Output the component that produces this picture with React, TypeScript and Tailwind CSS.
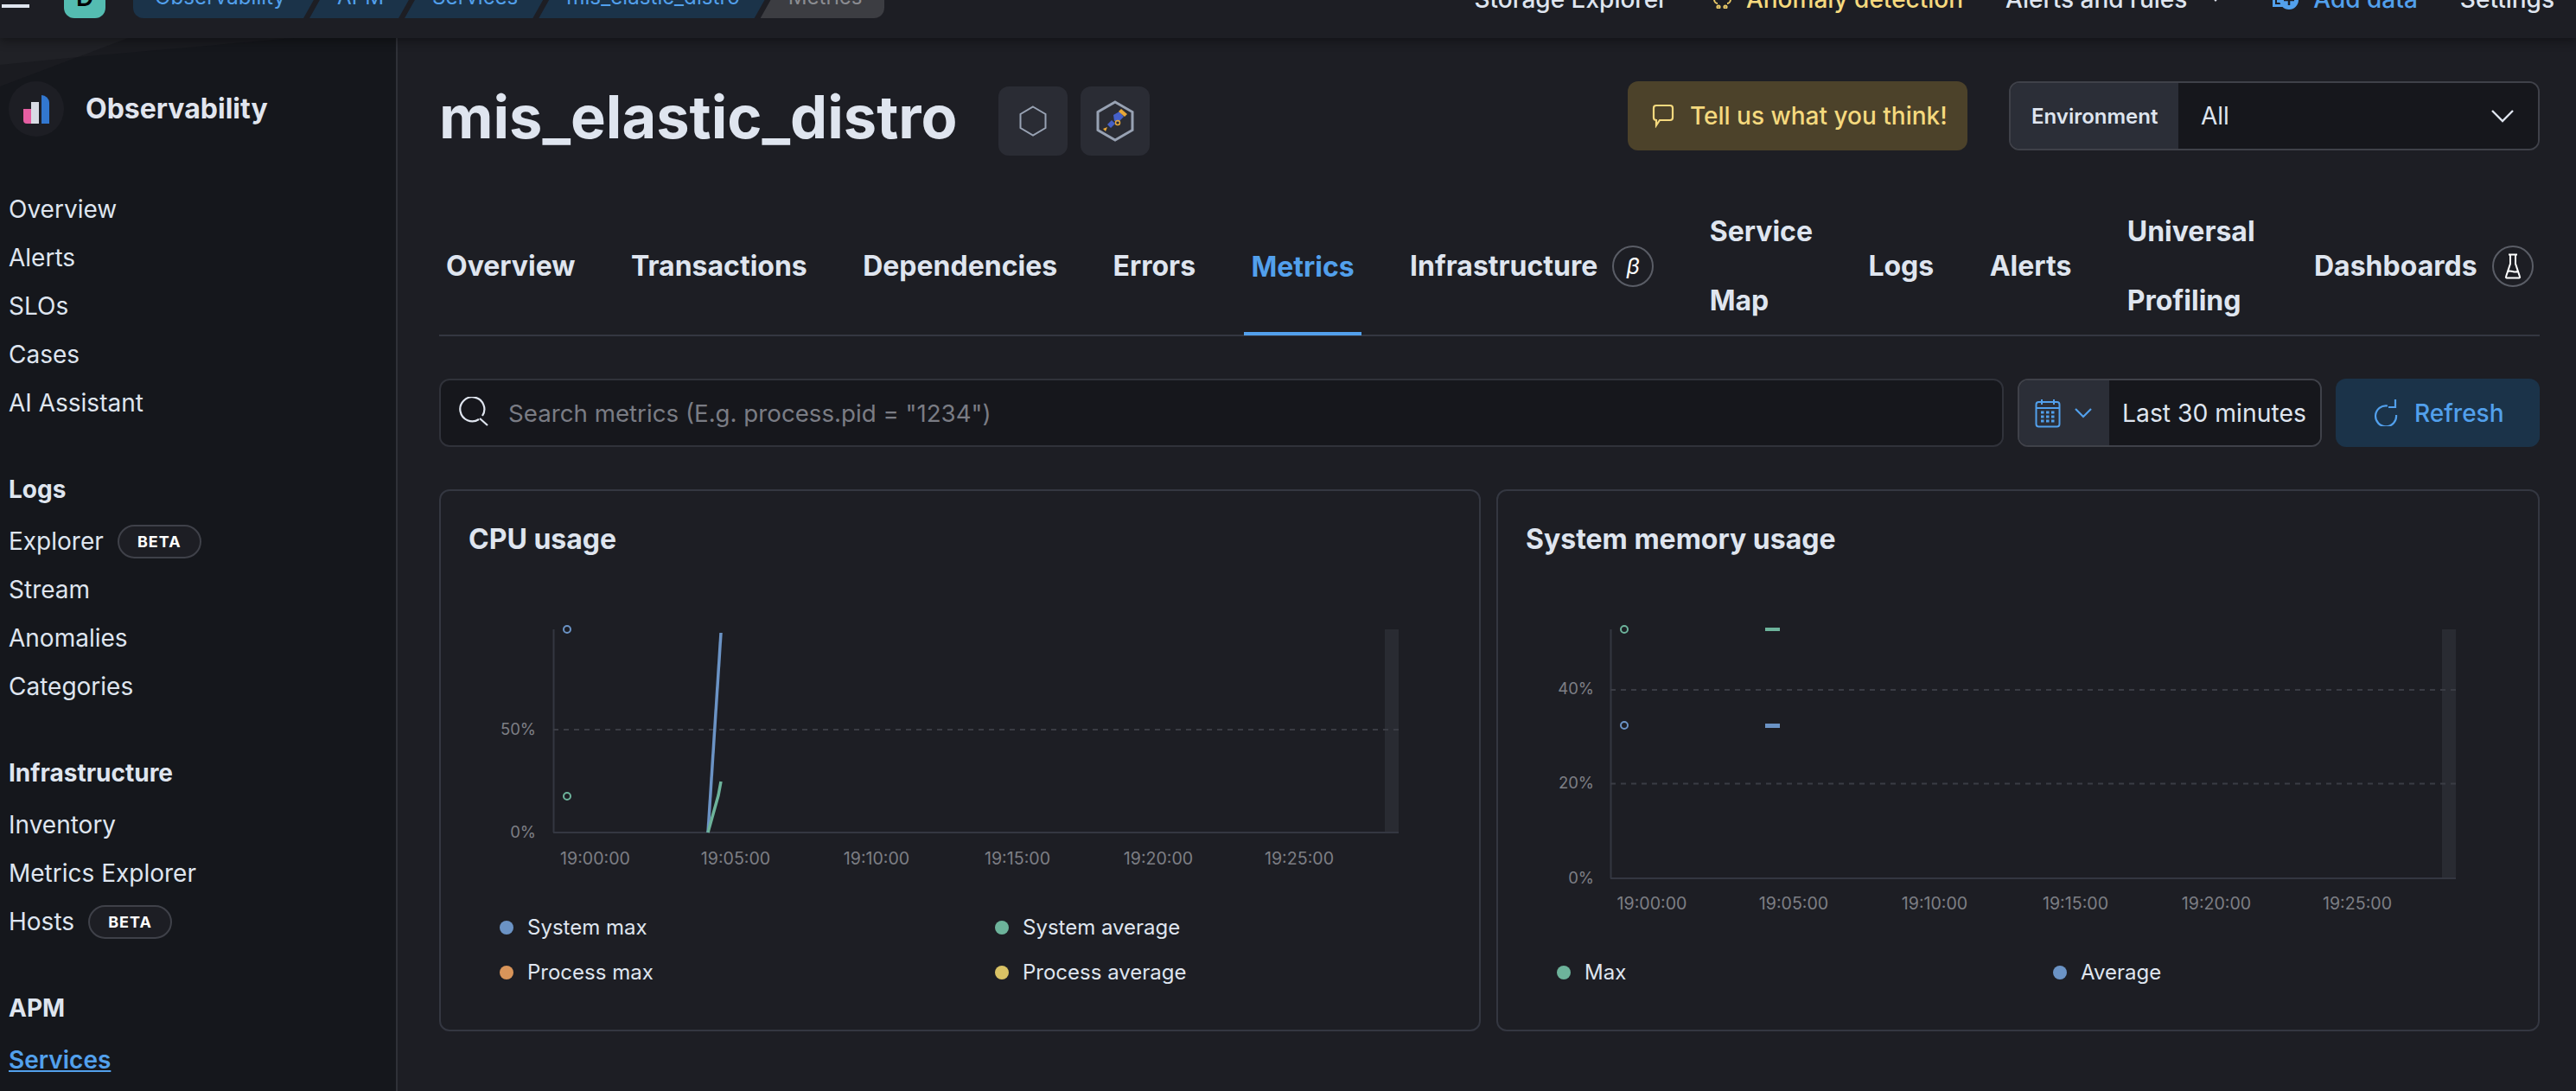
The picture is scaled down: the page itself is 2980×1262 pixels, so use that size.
import type { ReactNode } from "react";

const FONT = "[font-family:Inter,'Liberation_Sans',sans-serif]";

const crumbs = ["Observability", "APM", "Services", "mis_elastic_distro"];

const navGroups: { title?: string; items: { label: string; beta?: boolean; active?: boolean }[] }[] = [
  {
    items: [
      { label: "Overview" },
      { label: "Alerts" },
      { label: "SLOs" },
      { label: "Cases" },
      { label: "AI Assistant" },
    ],
  },
  {
    title: "Logs",
    items: [
      { label: "Explorer", beta: true },
      { label: "Stream" },
      { label: "Anomalies" },
      { label: "Categories" },
    ],
  },
  {
    title: "Infrastructure",
    items: [
      { label: "Inventory" },
      { label: "Metrics Explorer" },
      { label: "Hosts", beta: true },
    ],
  },
  {
    title: "APM",
    items: [{ label: "Services", active: true }],
  },
];

const BLUE = "#6b93c5";
const GREEN = "#6db39b";
const TICKS = ["19:00:00", "19:05:00", "19:10:00", "19:15:00", "19:20:00", "19:25:00"];

function Header() {
  return (
    <header className="relative z-10 h-[44px] shrink-0 overflow-hidden bg-[#1d1e24] shadow-[0_4px_10px_rgba(0,0,0,0.35)]">
      <div className="-mt-[51px] flex h-[96px] items-center text-[28px] text-[#dfe5ef]">
        <span className="ml-[2px] mt-[20px] h-[4px] w-[32px] shrink-0 bg-[#dfe5ef]" />
        <div className="ml-[40px] flex h-[48px] w-[48px] shrink-0 items-center justify-center rounded-[12px] bg-[#54bcb1] text-[28px] font-semibold text-black">
          D
        </div>
        <nav className="ml-[32px] flex h-[48px] items-center text-[24.2px]">
          {crumbs.map((c, i) => (
            <span
              key={c}
              className={
                i === 0
                  ? "flex h-full items-center rounded-l-[12px] bg-[#1b3349] pl-[25px] pr-[48px] text-[#52a0ec] [clip-path:polygon(0_0,100%_0,calc(100%-27px)_100%,0_100%)]"
                  : "-ml-[20px] flex h-full items-center bg-[#1b3349] pl-[32px] pr-[44px] text-[#52a0ec] [clip-path:polygon(27px_0,100%_0,calc(100%-27px)_100%,0_100%)]"
              }
            >
              {c}
            </span>
          ))}
          <span className="-ml-[20px] flex h-full items-center rounded-r-[12px] bg-[#3c3d42] pl-[32px] pr-[26px] text-[#8b8c91] [clip-path:polygon(27px_0,100%_0,100%_100%,0_100%)]">
            Metrics
          </span>
        </nav>
        <div className="ml-auto flex translate-y-[2px] items-center pr-[25px] font-medium">
          <span>Storage Explorer</span>
          <svg className="-mt-[4px] ml-[53px]" width="21" height="26" viewBox="0 0 21 26" fill="none" stroke="#e8c867" strokeWidth="2">
            <path d="M1 15c0 3 2 5 4 5M20 15c0 3-2 5-4 5" />
            <circle cx="6" cy="24" r="1.6" />
            <circle cx="14" cy="24" r="1.6" />
            <circle cx="10.5" cy="8" r="6" />
          </svg>
          <span className="ml-[17px] text-[#f5d97e]">Anomaly detection</span>
          <span className="ml-[49px]">Alerts and rules</span>
          <svg className="ml-[26px]" width="14" height="10" viewBox="0 0 14 10" fill="#dfe5ef">
            <path d="M2 2h10L7 8z" />
          </svg>
          <svg className="-mt-[6px] ml-[59px]" width="30" height="30" viewBox="0 0 30 30" fill="none">
            <rect x="1.5" y="4" width="22" height="21.5" stroke="#52a0ec" strokeWidth="3" />
            <rect x="5" y="18" width="4" height="4" fill="#52a0ec" />
            <circle cx="19" cy="19" r="11" fill="#52a0ec" />
            <path d="M19 13v12M13 19h12" stroke="#1d1e24" strokeWidth="2.5" />
          </svg>
          <span className="ml-[17px] text-[#52a0ec]">Add data</span>
          <span className="ml-[49px]">Settings</span>
        </div>
      </div>
    </header>
  );
}

function BetaBadge() {
  return (
    <span className="ml-[16px] flex h-[39px] w-[97px] items-center justify-center rounded-full border-2 border-[#3f4149] bg-[#1d1e24] text-[18px] font-bold tracking-[1px] text-white">
      BETA
    </span>
  );
}

function Sidebar() {
  return (
    <aside className="relative w-[460px] shrink-0 overflow-hidden border-r-2 border-[#2f3138] bg-[#15171c] text-[28px] text-[#dfe5ef]">
      {/* faint diagonal shapes in the corner */}
      <svg className="absolute left-0 top-0" width="458" height="110" viewBox="0 0 458 110">
        <path d="M0 0H340L90 22L0 56Z" fill="#1a1b20" />
        <path d="M0 0H148L90 22L0 31Z" fill="#202126" />
      </svg>
      <div className="relative ml-[10px] mt-[50px] flex h-[64px] items-center">
        <div className="flex h-[64px] w-[64px] items-center justify-center rounded-full bg-[#1d1e24]">
          <svg width="32" height="34" viewBox="0 0 32 34">
            <path d="M1 17h9v17H5a4 4 0 0 1-4-4z" fill="#e55ea2" />
            <rect x="10" y="9" width="9" height="25" fill="#d8dbe4" />
            <path d="M22 1a9 9 0 0 1 9 9v24h-9z" fill="#3277cf" />
          </svg>
        </div>
        <span className="ml-[25px] text-[32px] font-bold text-[#e1e5ee]">Observability</span>
      </div>
      <nav className="ml-[10px] mt-[56px]">
        {navGroups.map((g, i) => (
          <div key={g.title ?? "main"} className={i > 0 ? "mt-[44px]" : ""}>
            {g.title && <div className="mb-[4px] flex h-[56px] items-center font-bold">{g.title}</div>}
            {g.items.map((it) => (
              <div key={it.label} className="flex h-[56px] items-center">
                <span className={it.active ? "font-semibold text-[#52a0ec] underline" : ""}>{it.label}</span>
                {it.beta && <BetaBadge />}
              </div>
            ))}
          </div>
        ))}
      </nav>
    </aside>
  );
}

function IconTile({ children }: { children: ReactNode }) {
  return (
    <div className="flex h-[80px] w-[80px] items-center justify-center rounded-[12px] bg-[#2a2c34]">{children}</div>
  );
}

function TitleRow() {
  return (
    <div className="flex h-[80px] items-center">
      <h1 className="mt-[4px] text-[68.5px] font-bold leading-none text-[#dfe5ef]">mis_elastic_distro</h1>
      <div className="ml-[47px] mt-[12px] flex gap-[15px]">
        <IconTile>
          <svg width="32" height="36" viewBox="0 0 32 36" fill="none" stroke="#98a2b3" strokeWidth="2">
            <path d="M16 1.5 30.5 10v16L16 34.5 1.5 26V10z" />
          </svg>
        </IconTile>
        <IconTile>
          <svg width="44" height="48" viewBox="0 0 44 48" fill="none">
            <path d="M22 2 42 13.5v21L22 46 2 34.5v-21z" stroke="#98a2b3" strokeWidth="3" />
            <path d="M20 17l7-4 5 6-6 6-5-1z" fill="#4560c8" />
            <path d="M13 28l5-5 4 4-5 5z" fill="#4560c8" />
            <path d="M26 13l3-3 7 6-3 3z" fill="#e8a838" />
            <circle cx="25" cy="26" r="2.5" stroke="#e8a838" strokeWidth="1.5" />
            <path d="M8 33l5-2-2 5z" fill="#e8a838" />
          </svg>
        </IconTile>
      </div>
      <button className="ml-auto flex h-[80px] w-[393px] items-center rounded-[12px] bg-[#4c422a] pl-[28px] text-[28px] font-medium text-[#f5d97e]">
        <svg width="26" height="28" viewBox="0 0 26 28" fill="none" stroke="#f5d97e" strokeWidth="2.2">
          <path d="M5 2h16a3 3 0 0 1 3 3v11a3 3 0 0 1-3 3H9l-4 6v-6a3 3 0 0 1-3-3V5a3 3 0 0 1 3-3z" />
        </svg>
        <span className="ml-[18px]">Tell us what you think!</span>
      </button>
      <div className="ml-[48px] flex h-[80px] w-[614px] overflow-hidden rounded-[12px] border-2 border-[#3f4149]">
        <div className="flex w-[194px] items-center bg-[#2b2e37] pl-[24px] pt-[2px] text-[24px] font-semibold text-[#dfe5ef]">
          Environment
        </div>
        <div className="flex flex-1 items-center justify-between bg-[#16171c] pl-[26px] pr-[28px] text-[28px] text-[#dfe5ef]">
          <span>All</span>
          <svg width="26" height="16" viewBox="0 0 26 16" fill="none" stroke="#dfe5ef" strokeWidth="2.4">
            <path d="M1 2l12 12L25 2" />
          </svg>
        </div>
      </div>
    </div>
  );
}

function Tab({ children, active, wrap }: { children: ReactNode; active?: boolean; wrap?: boolean }) {
  return (
    <div
      className={
        "flex h-full items-center px-[8px] pt-[2px] text-[32px] font-bold leading-[80px] " +
        (wrap ? "w-min " : "") +
        (active ? "-mb-[2px] h-[162px] border-b-4 border-[#52a0ec] pt-[6px] text-[#52a0ec]" : "text-[#dfe5ef]")
      }
    >
      {children}
    </div>
  );
}

function Tabs() {
  return (
    <div className="mt-[53px] flex h-[162px] items-center gap-[48.4px] border-b-2 border-[#343741]">
      <Tab>Overview</Tab>
      <Tab>Transactions</Tab>
      <Tab>Dependencies</Tab>
      <Tab>Errors</Tab>
      <Tab active>Metrics</Tab>
      <Tab>
        Infrastructure
        <span className="ml-[17px] flex h-[48px] w-[48px] items-center justify-center rounded-full border-2 border-[#5a5d66] text-[26px] font-normal italic text-white">
          β
        </span>
      </Tab>
      <Tab wrap>Service Map</Tab>
      <Tab>Logs</Tab>
      <Tab>Alerts</Tab>
      <Tab wrap>Universal Profiling</Tab>
      <div className="ml-[4px] h-full">
        <Tab>
          Dashboards
          <span className="ml-[17px] flex h-[48px] w-[48px] shrink-0 items-center justify-center rounded-full border-2 border-[#5a5d66]">
            <svg width="20" height="30" viewBox="0 0 20 30" fill="none" stroke="white" strokeWidth="2">
              <path d="M5 1.5h10M7 2v10L2 27a1 1 0 0 0 1 1.5h14a1 1 0 0 0 1-1.5L13 12V2" />
              <path d="M4 21c4-2 7 2 12 0" />
            </svg>
          </span>
        </Tab>
      </div>
    </div>
  );
}

function SearchRow() {
  return (
    <div className="mt-[49px] flex h-[79px] items-center">
      <div className="flex h-full flex-1 items-center rounded-[12px] border-2 border-[#30323a] bg-[#16171c] pl-[19px]">
        <svg width="38" height="38" viewBox="0 0 38 38" fill="none" stroke="#dfe5ef" strokeWidth="2.2">
          <path d="M25 26A14 14 0 1 1 29 22" />
          <path d="M26 25l9 8" />
        </svg>
        <input
          className="ml-[21px] mt-[2px] flex-1 bg-transparent text-[27.7px] text-[#dfe5ef] outline-none placeholder:text-[#7a7c84]"
          placeholder={'Search metrics (E.g. process.pid = "1234")'}
        />
      </div>
      <div className="ml-[16px] flex h-full w-[352px] overflow-hidden rounded-[12px] border-2 border-[#3f4149]">
        <div className="flex w-[104px] items-center bg-[#2b2e37] pl-[18px]">
          <svg width="30" height="34" viewBox="0 0 30 34" fill="none" stroke="#52a0ec" strokeWidth="2">
            <rect x="1.5" y="4" width="27" height="28.5" rx="3" />
            <path d="M1.5 11h27M8 1v6M22 1v6" />
            <path d="M7 16h16M7 21h16M7 26h16" strokeWidth="3" strokeDasharray="3.5 2.5" />
          </svg>
          <svg className="ml-[16px]" width="20" height="12" viewBox="0 0 20 12" fill="none" stroke="#52a0ec" strokeWidth="2.2">
            <path d="M1 1l9 9 9-9" />
          </svg>
        </div>
        <div className="flex flex-1 items-center bg-[#16171c] pl-[15px] pt-[1px] text-[28.3px] text-[#dfe5ef]">Last 30 minutes</div>
      </div>
      <button className="ml-[16px] flex h-full w-[236px] items-center rounded-[12px] bg-[#1b3349] pl-[44px] text-[28px] font-medium text-[#52a0ec]">
        <svg className="-mt-[2px]" width="28" height="32" viewBox="0 0 28 32" fill="none" stroke="#52a0ec" strokeWidth="2.2">
          <path d="M16 8.5A12 12 0 1 0 26 19" />
          <path d="M25 1v9h-8" />
        </svg>
        <span className="ml-[19px]">Refresh</span>
      </button>
    </div>
  );
}

function AxisTicks({ xs, y }: { xs: number[]; y: number }) {
  return (
    <>
      {xs.map((x, i) => (
        <text key={x} x={x} y={y} textAnchor="middle" fontSize="19.6" fill="#7d7f85">
          {TICKS[i]}
        </text>
      ))}
    </>
  );
}

function YLabel({ y, right, label }: { y: number; right: number; label: string }) {
  return (
    <text x={right} y={y + 6} textAnchor="end" fontSize="18.5" fill="#7d7f85">
      {label}
    </text>
  );
}

function CpuChart() {
  return (
    <svg className="block" width="1201" height="347" viewBox="510 700 1201 347">
      <rect x="1602" y="728" width="16" height="235" fill="#292b32" />
      <path d="M640.5 728V963" stroke="#343741" strokeWidth="2" />
      <path d="M640 963H1618" stroke="#343741" strokeWidth="2" />
      <path d="M640 844H1618" stroke="#3a3c44" strokeWidth="2" strokeDasharray="6 6" />
      <YLabel y={844} right={620} label="50%" />
      <YLabel y={963} right={620} label="0%" />
      <AxisTicks xs={[688.5, 851, 1014, 1177, 1340, 1503]} y={1000} />
      <circle cx="656" cy="728" r="4" fill="#1d1e24" stroke={BLUE} strokeWidth="2" />
      <circle cx="656" cy="921" r="4" fill="#1d1e24" stroke={GREEN} strokeWidth="2" />
      <path d="M819 963 834 732" stroke={BLUE} strokeWidth="3.5" fill="none" />
      <path d="M819 963 831 920 834 904" stroke={GREEN} strokeWidth="3.5" fill="none" />
    </svg>
  );
}

function MemoryChart() {
  return (
    <svg className="block" width="1203" height="399" viewBox="1733 700 1203 399">
      <rect x="2825" y="728" width="16" height="288" fill="#292b32" />
      <path d="M1863.5 728V1016" stroke="#343741" strokeWidth="2" />
      <path d="M1863 1016H2841" stroke="#343741" strokeWidth="2" />
      <path d="M1863 798H2841" stroke="#3a3c44" strokeWidth="2" strokeDasharray="6 6" />
      <path d="M1863 906.5H2841" stroke="#3a3c44" strokeWidth="2" strokeDasharray="6 6" />
      <YLabel y={797} right={1844} label="40%" />
      <YLabel y={906} right={1844} label="20%" />
      <YLabel y={1016} right={1844} label="0%" />
      <AxisTicks xs={[1911, 2075, 2238, 2401, 2564, 2727]} y={1052} />
      <circle cx="1879" cy="728" r="4" fill="#1d1e24" stroke={GREEN} strokeWidth="2" />
      <circle cx="1879" cy="839" r="4" fill="#1d1e24" stroke={BLUE} strokeWidth="2" />
      <rect x="2042" y="726" width="17" height="4" fill={GREEN} />
      <rect x="2042" y="837" width="17" height="5" fill={BLUE} />
    </svg>
  );
}

function LegendItem({ color, label }: { color: string; label: string }) {
  return (
    <div className="flex h-[52px] items-center text-[24px] text-[#dfe5ef]">
      <span className="mr-[16px] h-[16px] w-[16px] rounded-full" style={{ backgroundColor: color }} />
      {label}
    </div>
  );
}

function Card({ title, children }: { title: string; children: ReactNode }) {
  return (
    <section className="h-[627px] rounded-[12px] border-2 border-[#343741]">
      <h2 className="ml-[32px] mt-[36px] h-[96px] text-[32px] font-bold leading-[40px] text-[#dfe5ef]">{title}</h2>
      {children}
    </section>
  );
}

export default function App() {
  return (
    <div className={"flex h-screen w-full flex-col overflow-hidden bg-[#1d1e24] " + FONT}>
      <Header />
      <div className="flex min-h-0 flex-1">
        <Sidebar />
        <main className="min-w-0 flex-1 pl-[48px] pr-[42px] pt-[50px]">
          <TitleRow />
          <Tabs />
          <SearchRow />
          <div className="mt-[49px] grid grid-cols-[1205px_1fr] gap-[18px]">
            <Card title="CPU usage">
              <CpuChart />
              <div className="ml-[68px] grid grid-cols-[573px_1fr]">
                <LegendItem color={BLUE} label="System max" />
                <LegendItem color={GREEN} label="System average" />
                <LegendItem color="#d9955a" label="Process max" />
                <LegendItem color="#d9c265" label="Process average" />
              </div>
            </Card>
            <Card title="System memory usage">
              <MemoryChart />
              <div className="ml-[68px] grid grid-cols-[574px_1fr]">
                <LegendItem color={GREEN} label="Max" />
                <LegendItem color={BLUE} label="Average" />
              </div>
            </Card>
          </div>
        </main>
      </div>
    </div>
  );
}
